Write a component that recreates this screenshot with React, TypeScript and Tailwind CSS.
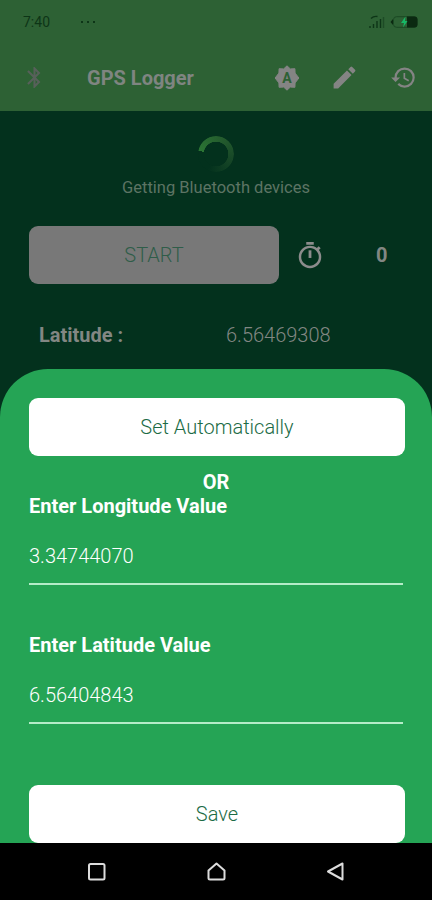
import { IoMdStopwatch } from "react-icons/io";
import { MdBluetooth, MdEdit, MdHistory } from "react-icons/md";

function StatusBar() {
  return (
    <div className="flex h-[44px] items-center justify-between pl-[23px] pr-[14px] text-[#0d3517]">
      <div className="flex items-center">
        <span className="w-[58px] text-[14px] leading-none">7:40</span>
        <div className="flex gap-[4px]">
          <span className="h-[2px] w-[2px] bg-[#0d3517]" />
          <span className="h-[2px] w-[2px] bg-[#0d3517]" />
          <span className="h-[2px] w-[2px] bg-[#0d3517]" />
        </div>
      </div>
      <div className="flex items-center gap-[5px]">
        <svg width="17" height="14" viewBox="0 0 17 14" fill="none" stroke="currentColor" strokeWidth="1.4">
          <path d="M2 13v-2M5.5 13V9M9 13V6M12.5 13V4" />
          <path d="M15.5 13V2" opacity="0.5" />
          <path d="M3 3.5C5 1.5 7 1 9.500 1.500" />
        </svg>
        <svg width="28" height="12" viewBox="0 0 28 12">
          <path d="M3 3v6L0.500 6z" fill="#0b2911" />
          <rect x="3.500" y="0.700" width="23.500" height="10.600" rx="3" fill="none" stroke="#1a4823" />
          <path d="M17 0.500h7.500a3 3 0 0 1 3 3v5a3 3 0 0 1-3 3H17z" fill="#0b2911" />
          <path d="M15.500 0.500 11 7h3l-1 4.500L17.500 5H15z" fill="#17b866" />
        </svg>
      </div>
    </div>
  );
}

function AutoBadge() {
  return (
    <svg width="26" height="26" viewBox="0 0 26 26" className="fill-[#848484]">
      <path
        d="M13 0.800l3.300 3.100 4.600-0.200 0.200 4.400 3.800 4.900-3.800 4.900-0.200 4.400-4.600-0.200L13 25.200l-3.300-3.100-4.600 0.200-0.200-4.400L1.100 13l3.800-4.900 0.200-4.400 4.600 0.200z"
        strokeLinejoin="round"
        strokeWidth="1"
        stroke="#848484"
      />
      <text x="13" y="18" textAnchor="middle" fontSize="14" fontWeight="700" className="fill-[#2d6134]">
        A
      </text>
    </svg>
  );
}

function Header() {
  return (
    <header className="h-[111px] bg-[#2d6134]">
      <StatusBar />
      <div className="flex h-[67px] items-center pl-[22px] pr-[15px] text-[#848484]">
        <MdBluetooth className="h-[25px] w-[25px] text-[#57605a]" />
        <h1 className="ml-[40px] flex-1 text-[20px] font-bold leading-none text-[#7f8581]">GPS Logger</h1>
        <AutoBadge />
        <MdEdit className="ml-[30px] h-[29px] w-[29px]" />
        <MdHistory className="ml-[31px] h-[27px] w-[27px]" />
      </div>
    </header>
  );
}

function Spinner() {
  return (
    <div className="h-[36px] w-[36px] rounded-full bg-[conic-gradient(from_280deg,#2b7534,#235a2d_30%,#154526_55%,#03311d_80%,#03311d)] [mask:radial-gradient(circle,transparent_12px,black_12.500px)]" />
  );
}

function ValueField({ label, value }: { label: string; value: string }) {
  return (
    <div>
      <div className="text-[20px] font-bold leading-[24px]">{label}</div>
      <div className="mt-[15px] h-[52px] border-b-2 border-[#b5ecc8] pt-[11px] text-[20px] font-light leading-[24px]">
        {value}
      </div>
    </div>
  );
}

function NavBar() {
  return (
    <nav className="flex h-[57px] items-center justify-between bg-black px-[86px]">
      <svg width="21" height="21" viewBox="0 0 21 21" fill="none" stroke="#dcdcdc" strokeWidth="2">
        <rect x="3" y="3" width="15.500" height="15.500" rx="1.500" />
      </svg>
      <svg width="21" height="21" viewBox="0 0 21 21" fill="none" stroke="#dcdcdc" strokeWidth="2" strokeLinejoin="round">
        <path d="M2.500 9.500 10.500 2.500l8 7V17a1.500 1.500 0 0 1-1.500 1.500H4A1.500 1.500 0 0 1 2.500 17z" />
      </svg>
      <svg width="21" height="21" viewBox="0 0 21 21" fill="none" stroke="#dcdcdc" strokeWidth="2" strokeLinejoin="round">
        <path d="M17.500 2.500v16L3 10.500z" />
      </svg>
    </nav>
  );
}

export default function App() {
  return (
    <div className="flex h-[900px] w-[432px] flex-col overflow-hidden bg-[#03311d] font-['Roboto',sans-serif]">
      <Header />

      {/* Dimmed screen behind the sheet */}
      <main className="h-[258px] shrink-0 text-[#828783]">
        <div className="flex flex-col items-center pt-[25px]">
          <Spinner />
          <p className="mt-[5px] text-[16.500px] leading-[22px] text-[#5d7464]">Getting Bluetooth devices</p>
        </div>
        <div className="mt-[27px] flex items-center pl-[29px]">
          <button className="h-[58px] w-[250px] rounded-[9px] bg-[#787878] text-[20px] font-light text-[#2f5d49]">
            START
          </button>
          <IoMdStopwatch className="ml-[16px] h-[30px] w-[30px] text-[#8c8c8c]" />
          <span className="ml-[51px] text-[20px] font-bold">0</span>
        </div>
        <div className="mt-[39px] flex pl-[39px] text-[20px] leading-[24px]">
          <span className="w-[187px] font-bold">Latitude :</span>
          <span className="font-light">6.56469308</span>
        </div>
      </main>

      <section className="flex h-[474px] shrink-0 flex-col overflow-hidden rounded-t-[48px] bg-[#25a455] px-[29px] pt-[29px] text-white">
        <button className="h-[58px] w-[376px] shrink-0 rounded-[9px] bg-white text-[20px] font-light text-[#1c6b45]">
          Set Automatically
        </button>
        <div className="mt-[14px] text-center text-[20px] font-bold leading-[24px]">OR</div>
        <ValueField label="Enter Longitude Value" value="3.34744070" />
        <div className="mt-[48px]">
          <ValueField label="Enter Latitude Value" value="6.56404843" />
        </div>
        <button className="mt-[61px] h-[58px] w-[376px] shrink-0 rounded-[9px] bg-white text-[20px] font-light text-[#1c6b45]">
          Save
        </button>
      </section>

      <NavBar />
    </div>
  );
}
